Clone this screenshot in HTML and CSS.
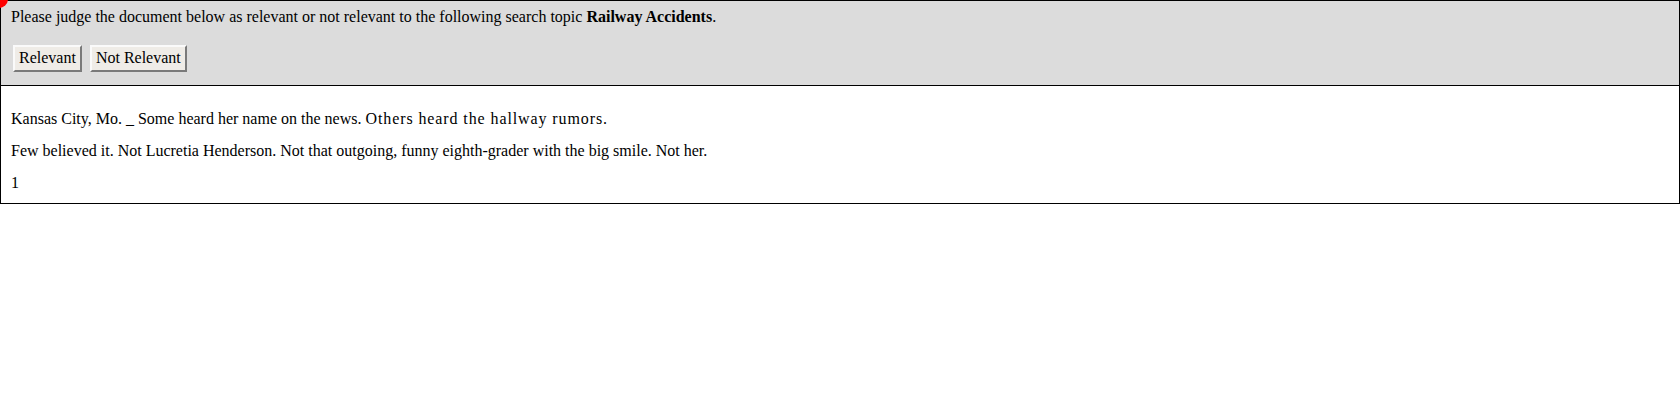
FILE: index.html
```html
<!DOCTYPE html>
<html>
<head>
<meta charset="utf-8">
<link rel="stylesheet" href="styles.css">
</head>
<body>
<div class="page">
  <span class="dot"></span>
  <div class="header">
    <div class="prompt">Please judge the document below as relevant or not relevant to the following search topic <b>Railway Accidents</b>.</div>
    <div class="actions">
      <button class="btn">Relevant</button>
      <button class="btn">Not Relevant</button>
    </div>
  </div>
  <div class="doc">
    <p>Kansas City, Mo. _ Some heard her name on the news. <span class="wide">Others heard the hallway rumors.</span></p>
    <p>Few believed it. Not Lucretia Henderson. Not that outgoing, funny eighth-grader with the big smile. Not her.</p>
    <p>1</p>
  </div>
</div>
</body>
</html>
```
FILE: styles.css
```css
html, body {
  margin: 0;
  padding: 0;
  background: #fff;
}
body {
  font-family: "Liberation Serif", "Times New Roman", serif;
  font-size: 16px;
  line-height: 18px;
  color: #000;
}
.page {
  position: relative;
}
.dot {
  position: absolute;
  top: -10px;
  left: -10px;
  width: 18px;
  height: 18px;
  border-radius: 50%;
  background: #ff0000;
}
.header {
  background: #dcdcdc;
  border: 1px solid #000;
  padding: 7px 10px 11px;
}
.actions {
  display: flex;
  gap: 4px;
  margin-top: 17px;
}
.btn {
  margin: 2px;
  font-family: "Liberation Serif", "Times New Roman", serif;
  font-size: 16px;
  line-height: 18px;
  color: #000;
  background: #efece7;
  padding: 2px 4px 3px;
  border-width: 2px;
  border-style: solid;
  border-color: #fafafa #7a7a7a #7a7a7a #fafafa;
  border-radius: 0;
}
.doc {
  border: 1px solid #000;
  border-top: none;
  padding: 24px 10px 11px;
  display: flex;
  flex-direction: column;
  gap: 14px;
}
.doc p {
  margin: 0;
}
.doc .wide {
  letter-spacing: 0.9px;
}
```
